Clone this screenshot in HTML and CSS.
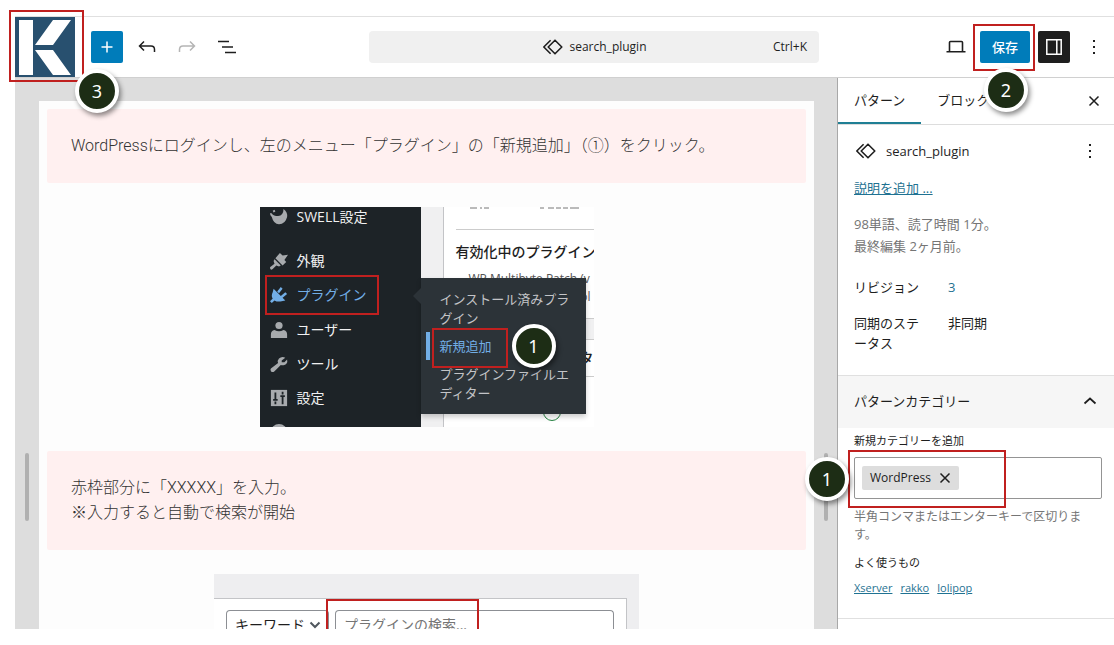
FILE: index.html
```
<!DOCTYPE html>
<html lang="ja">
<head>
<meta charset="utf-8">
<title>search_plugin</title>
<link rel="stylesheet" href="styles.css">
</head>
<body>
<svg class="defs" aria-hidden="true">
  <symbol id="sync" viewBox="0 0 24 24"><path d="M14 5.2 20.8 12 14 18.8 7.2 12ZM9.6 5.2 2.8 12l6.8 6.8" fill="none" stroke="currentColor" stroke-width="1.6" stroke-linejoin="round"/></symbol>
  <symbol id="dots" viewBox="0 0 24 24"><path d="M11 5h2v2h-2zM11 11h2v2h-2zM11 17h2v2h-2z" fill="currentColor"/></symbol>
  <symbol id="cross" viewBox="0 0 24 24"><path d="m7.500 7.500 9 9m0-9-9 9" fill="none" stroke="currentColor" stroke-width="1.500"/></symbol>
</svg>
<div class="editor">
  <header class="topbar">
    <div class="tools">
      <a class="logo" href="#" aria-label="サイト">
        <svg viewBox="0 0 60 60"><path fill="#28506f" d="M0 0h60v60H0z"/><path fill="#fff" d="M4 3h14v55H4zM38 3h18L38 28H20zM20 33h18l18 25H38z"/></svg>
        <span class="mark mark-logo"></span><span class="step step-logo">3</span>
      </a>
      <button class="icon-btn primary" aria-label="追加"><svg viewBox="0 0 24 24"><path d="M12 6.500v11M6.500 12h11" stroke="#fff" stroke-width="1.500"/></svg></button>
      <button class="icon-btn" aria-label="元に戻す"><svg viewBox="0 0 24 24"><path d="M9 6.500 4.500 11 9 15.500M4.500 11H16q3.500 0 3.500 3.500V17" fill="none" stroke="#1e1e1e" stroke-width="1.500"/></svg></button>
      <button class="icon-btn" aria-label="やり直す"><svg viewBox="0 0 24 24"><path d="M15 6.500 19.500 11 15 15.500M19.500 11H8q-3.500 0-3.500 3.500V17" fill="none" stroke="#b5b5b5" stroke-width="1.500"/></svg></button>
      <button class="icon-btn" aria-label="リスト表示"><svg viewBox="0 0 24 24"><path d="M3 6.500h11M7 12h11M10 17.500h11" stroke="#1e1e1e" stroke-width="1.500"/></svg></button>
    </div>
    <button class="command"><span class="command-title"><svg class="ic"><use href="#sync"/></svg>search_plugin</span><span class="shortcut">Ctrl+K</span></button>
    <div class="actions">
      <button class="icon-btn" aria-label="表示"><svg viewBox="0 0 24 24"><path d="M5.500 16V7.500q0-1 1-1h11q1 0 1 1V16M2.500 16.800h19" fill="none" stroke="#1e1e1e" stroke-width="1.600"/></svg></button>
      <span class="save-wrap"><button class="save">保存</button><span class="mark mark-save"></span><span class="step step-save">2</span></span>
      <button class="icon-btn dark" aria-label="設定"><svg viewBox="0 0 24 24"><path d="M4.800 4.800h14.400v14.400H4.800zM14.800 5v14" fill="none" stroke="#fff" stroke-width="1.500"/></svg></button>
      <button class="icon-btn" aria-label="オプション"><svg><use href="#dots"/></svg></button>
    </div>
  </header>
  <div class="body">
    <main class="canvas">
      <div class="gutter"><span class="handle"></span></div>
      <article class="page">
        <p class="note">WordPressにログインし、左のメニュー「プラグイン」の「新規追加」（①）をクリック。</p>
        <div class="shot-menu">
          <ul class="admin">
            <li class="cut"><svg viewBox="0 0 20 20"><path d="M0 6q1-1 2 0 2 3 7 3 6-1 6-8 5 4 4 9-2 8-9 8-6 0-8-8Q0 8 0 6ZM3 3l2-1 1 2-2 1Z"/></svg>SWELL設定</li>
            <li><svg viewBox="0 0 20 20"><path d="m11 1 3 3 6-1-4 6 2 2-4 4-8-8ZM5 8l7 7-2 1-3-1-4 4q-3 2-3-2l5-4-1-3Z"/></svg>外観</li>
            <li class="active"><svg viewBox="0 0 20 20"><path d="m4 3 13 13-4 1q-5 1-8-1l-3 3-2-2 3-3Q1 11 3 7ZM8 6l4-5 2 2-4 5ZM12 11l5-4 2 2-5 4Z"/></svg>プラグイン<span class="mark mark-plugin"></span></li>
            <li><svg viewBox="0 0 20 20"><circle cx="10" cy="5" r="4"/><path d="M5 10q5 3 10 0 4 1 4 5v4H1v-4q0-4 4-5Z"/></svg>ユーザー</li>
            <li><svg viewBox="0 0 20 20"><path d="m17 3-4 3v2h3l3-3q1 5-3 6-2 1-4 0l-7 7q-2 2-4 0-1-2 0-3l8-6q-1-3 1-5 3-3 7-1Z"/></svg>ツール</li>
            <li><svg viewBox="0 0 20 20"><path d="M1 1h18v18H1z"/><path d="M6 4v7M6 14v3M3.500 12h5M14 3v3M14 9v8M11.500 8h5" stroke="#1d2327" stroke-width="2"/></svg>設定</li>
            <li class="tail"><svg viewBox="0 0 20 20"><circle cx="10" cy="10" r="9"/></svg></li>
          </ul>
          <div class="plugins">
            <svg class="sliver" viewBox="0 0 138 3"><path d="M14 1h7m3 0h2m2 0h5M84 1h4m4 0h6m2 0h5m2 0h5m2 0h9" stroke="#777" stroke-width="1"/></svg>
            <h3>有効化中のプラグイン</h3>
            <p class="patch">WP Multibyte Patch (v</p>
            <p class="tail-text">ol</p>
            <div class="band"></div>
            <h3 class="right">タ</h3>
            <span class="ring"></span>
          </div>
          <ul class="flyout">
            <li>インストール済みプラグイン</li>
            <li class="current">新規追加<span class="mark mark-new"></span><span class="step step-new">1</span></li>
            <li>プラグインファイルエディター</li>
          </ul>
        </div>
        <p class="note">赤枠部分に「XXXXX」を入力。<br>※入力すると自動で検索が開始</p>
        <div class="shot-search">
          <div class="search-box">
            <select aria-label="検索種別"><option>キーワード</option></select>
            <svg class="caret" viewBox="0 0 12 8"><path d="m1.500 1.500 4.500 4.500 4.500-4.500" fill="none" stroke="#50575e" stroke-width="2"/></svg>
            <input type="search" aria-label="プラグインの検索" placeholder="プラグインの検索...">
            <span class="mark mark-search"></span>
          </div>
        </div>
      </article>
      <div class="gutter"><span class="handle"></span></div>
    </main>
    <aside class="sidebar">
      <div class="tabs"><button class="tab selected">パターン</button><button class="tab">ブロック</button><button class="icon-btn close" aria-label="閉じる"><svg><use href="#cross"/></svg></button></div>
      <section class="card">
        <div class="card-head"><svg class="ic"><use href="#sync"/></svg><h2>search_plugin</h2><button class="icon-btn" aria-label="操作"><svg><use href="#dots"/></svg></button></div>
        <a class="describe" href="#">説明を追加 ...</a>
        <p class="meta">98単語、読了時間 1分。<br>最終編集 2ヶ月前。</p>
        <dl><dt>リビジョン</dt><dd><a href="#">3</a></dd><dt>同期のステータス</dt><dd>非同期</dd></dl>
      </section>
      <section class="panel">
        <button class="panel-head">パターンカテゴリー<svg viewBox="0 0 24 24"><path d="m6.500 14.500 5.500-5 5.500 5" fill="none" stroke="#1e1e1e" stroke-width="1.700"/></svg></button>
        <div class="panel-body">
          <label for="cat">新規カテゴリーを追加</label>
          <div class="token-field">
            <span class="token">WordPress<button aria-label="削除"><svg class="ic"><use href="#cross"/></svg></button></span>
            <input id="cat" type="text">
            <span class="mark mark-token"></span><span class="step step-token">1</span>
          </div>
          <p class="help">半角コンマまたはエンターキーで区切ります。</p>
          <h3>よく使うもの</h3>
          <p class="links"><a href="#">Xserver</a><a href="#">rakko</a><a href="#">lolipop</a></p>
        </div>
      </section>
    </aside>
  </div>
</div>
</body>
</html>
```
FILE: styles.css
```
* { box-sizing: border-box; }
body, p, ul, dl, dd, h2, h3 { margin: 0; padding: 0; }
body { background: #fff; color: #1e1e1e; font: 13px/20px "Open Sans", "Noto Sans CJK JP", sans-serif; }
button, input, select { font: inherit; color: inherit; margin: 0; }
button { padding: 0; border: 0; background: none; }
ul { list-style: none; }
a { color: #1f7292; }
svg { display: block; }
.defs { position: absolute; width: 0; height: 0; }
.ic { width: 24px; height: 24px; flex: none; }

.editor { height: 100vh; padding: 16px 0 16px 15px; display: flex; flex-direction: column; }
.topbar { flex: none; display: grid; grid-template-columns: 6fr 450px 5fr; align-items: center; border-top: 1px solid #e0e0e0; border-bottom: 1px solid #d0d0d0; position: relative; z-index: 2; }
.tools, .actions { display: flex; align-items: center; gap: 8px; }
.logo { width: 60px; height: 60px; margin-right: 8px; position: relative; }
.icon-btn { width: 32px; height: 32px; display: grid; place-items: center; border-radius: 2px; flex: none; }
.icon-btn svg { width: 24px; height: 24px; }
.primary, .save { background: #007cba; color: #fff; }
.dark { background: #1e1e1e; }
.command { height: 32px; background: #f0f0f0; border-radius: 4px; display: grid; grid-template-columns: 1fr auto 1fr; align-items: center; padding: 0 12px; }
.command-title { grid-column: 2; display: flex; align-items: center; gap: 4px; font-size: 12px; }
.shortcut { text-align: right; font-size: 12px; }
.actions { justify-content: flex-end; padding-right: 4px; }
.save-wrap { position: relative; }
.save { width: 50px; height: 32px; display: block; border-radius: 2px; font-weight: 500; }

.mark { position: absolute; border: 2px solid #c0201f; pointer-events: none; }
.step { position: absolute; width: 44px; height: 44px; border: 4px solid #fff; border-radius: 50%; background: #1d2d15; color: #fff; font: 18px/36px "Noto Sans", sans-serif; text-align: center; box-shadow: 2px 3px 5px rgba(0,0,0,.45); z-index: 3; }
.mark-logo { inset: -7px -9px -5px -6px; }
.step-logo { left: 60px; top: 52px; }
.mark-save { inset: -7px -5px -8px -7px; }
.step-save { left: 4px; top: 37px; }
.mark-plugin { inset: -3px 42px -3px 5px; }
.mark-new { inset: -4px 78px -8px 11px; }
.step-new { left: 91px; top: -8px; }
.mark-token { inset: -8px 95px -10px -7px; }
.step-token { left: -50px; top: -1px; }
.mark-search { left: 112px; top: 0; width: 153px; height: 60px; }

.body { flex: 1; min-height: 0; display: grid; grid-template-columns: minmax(0, 1fr) 277px; }
.canvas { min-height: 0; background: #ddd; padding-top: 23px; display: grid; grid-template-columns: 24px minmax(0, 1fr) 23px; overflow: hidden; }
.handle { display: block; width: 4px; height: 68px; margin: 352px auto 0; border-radius: 2px; background: #b0b0b0; }
.page { background: #fdfdfd; padding: 8px; display: flex; flex-direction: column; align-items: center; gap: 24px; overflow: hidden; }
.note { align-self: stretch; padding: 24px 24px 25px; background: #fff0f0; color: #333; border-radius: 2px; font-family: Roboto, "Noto Sans CJK JP", sans-serif; font-size: 16px; line-height: 25px; font-weight: 300; }

.shot-menu { flex: none; width: 334px; height: 220px; display: grid; grid-template-columns: 161px 1fr; overflow: hidden; background: #f0f0f1; position: relative; }
.admin { background: #1d2327; color: #f0f0f1; font-size: 14px; height: 220px; overflow: hidden; }
.admin li { height: 34px; display: flex; align-items: center; gap: 9px; padding-left: 10px; position: relative; }
.admin svg { width: 18px; height: 18px; fill: #a7aaad; }
.admin .cut { margin: -7px 0 10px; }
.admin .active { color: #72aee6; margin-bottom: 1px; }
.admin .active svg { fill: #72aee6; }
.plugins { margin-left: 22px; padding-left: 12px; border-left: 1px solid #c3c4c7; background: #fff; overflow: hidden; white-space: nowrap; }
.sliver { width: 138px; height: 3px; }
.plugins h3 { font-size: 14px; font-weight: 500; line-height: 44px; }
.sliver + h3 { margin-top: 19px; border-top: 1px solid #ccc; }
.patch, .tail-text { font-size: 12px; line-height: 18px; margin-top: -4px; padding-left: 13px; color: #555; }
.tail-text { text-align: right; margin-top: 0; padding-right: 3px; }
.band { height: 22px; margin-top: 12px; background: #f0f0f1; border: 1px solid #ccc; border-width: 1px 0; }
.plugins .right { text-align: right; line-height: 36px; border-bottom: 1px solid #ccc; }
.ring { display: block; width: 18px; height: 18px; margin: 26px 0 0 87px; border: 1px solid #278443; border-radius: 50%; }
.flyout { position: absolute; left: 161px; top: 71px; width: 165px; padding: 12px 0 11px; background: #2c3338; color: #c3c4c7; line-height: 19px; box-shadow: 0 3px 5px rgba(0,0,0,.2); }
.flyout::before { content: ""; position: absolute; left: -8px; top: 10px; border: 8px solid transparent; border-left: 0; border-right-color: #2c3338; }
.flyout li { padding: 0 15px 0 19px; }
.flyout .current { position: relative; color: #72aee6; line-height: 28px; margin: 4px 0 5px; }
.flyout .current::before { content: ""; position: absolute; left: 5px; top: 0; bottom: 0; width: 4px; background: #72aee6; }

.shot-search { align-self: center; flex: none; width: 425px; padding: 24px 12px 0 0; background: #eeeef0; }
.search-box { height: 60px; display: flex; align-items: flex-start; gap: 6px; padding: 11px 12px; background: #fff; border: 1px solid #c3c4c7; border-width: 1px 1px 0 0; position: relative; }
.search-box select, .search-box input { height: 28px; border: 1px solid #8c8f94; border-radius: 4px; background: #fff; font-size: 14px; line-height: 20px; padding: 0 8px; }
.search-box select { width: 103px; appearance: none; }
.search-box input { flex: 1; min-width: 0; height: 27px; border-bottom: 0; border-radius: 4px 4px 0 0; appearance: none; }
.search-box select { border-bottom: 0; border-radius: 4px 4px 0 0; }
.search-box input::placeholder { color: #757575; }
.caret { position: absolute; left: 95px; top: 22px; width: 12px; height: 8px; }

.sidebar { border-left: 1px solid #a8a8a8; background: #fff; min-width: 0; }
.tabs { height: 47px; display: flex; align-items: stretch; border-bottom: 1px solid #ddd; }
.tab { padding: 0 16px 2px; }
.selected { box-shadow: inset 0 -2px #1f7f94; }
.close { margin: auto 4px auto auto; }
.card { padding: 10px 16px 22px; }
.card-head { display: flex; align-items: center; gap: 8px; margin-right: -8px; }
.card-head h2 { flex: 1; font-size: 13px; font-weight: 400; }
.describe { display: block; width: fit-content; margin: 11px 0 15px; }
.meta { color: #757575; line-height: 22px; }
dl { display: grid; grid-template-columns: 70px 1fr; column-gap: 24px; row-gap: 16px; margin-top: 20px; }
dd a { text-decoration: none; }
.panel { border-bottom: 1px solid #e0e0e0; }
.panel-head { width: 100%; height: 53px; padding: 0 12px 2px 16px; display: flex; align-items: center; justify-content: space-between; background: #f6f6f6; border-top: 1px solid #e0e0e0; }
.panel-head svg { width: 24px; height: 24px; }
.panel-body { padding: 4px 12px 20px 16px; }
.panel label { display: block; font-size: 11px; line-height: 18px; margin-bottom: 7px; }
.token-field { height: 42px; display: flex; align-items: center; padding: 0 7px; border: 1px solid #949494; border-radius: 2px; position: relative; }
.token { display: flex; align-items: center; gap: 2px; height: 24px; padding: 0 2px 0 8px; background: #ddd; border-radius: 2px; font-size: 12px; flex: none; }
.token-field input { flex: 1; min-width: 0; border: 0; outline: 0; background: none; }
.help { margin: 9px 0 10px; font-size: 12px; line-height: 18px; color: #757575; }
.panel h3 { font-size: 11px; font-weight: 400; line-height: 18px; }
.links { display: flex; gap: 8px; margin-top: 6px; font-size: 11px; }
```
